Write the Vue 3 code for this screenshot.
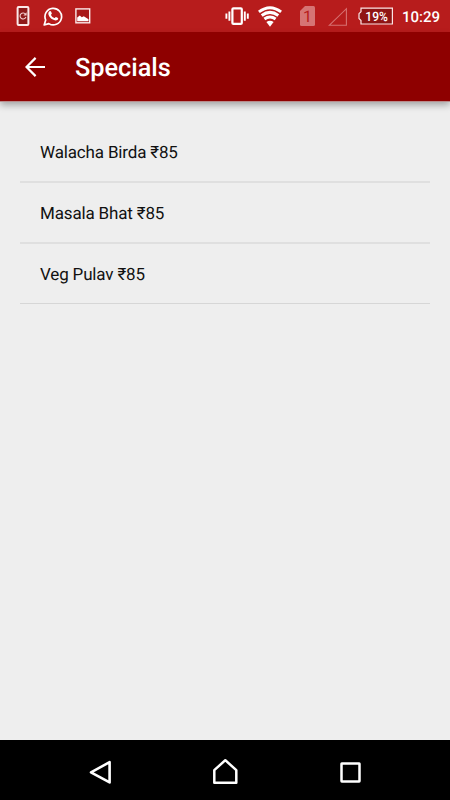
<script setup>
import { ref } from 'vue'

const title = ref('Specials')
const time = ref('10:29')
const battery = ref(19)

const dishes = ref([
  { name: 'Walacha Birda', price: 85 },
  { name: 'Masala Bhat', price: 85 },
  { name: 'Veg Pulav', price: 85 }
])
</script>

<template>
  <div class="screen">
    <div class="status">
      <!-- notifications -->
      <svg class="sync" width="14" height="32" viewBox="0 0 14 32">
        <rect x="1.6" y="7.1" width="10.8" height="17.8" rx="1" fill="#8f1a1a" stroke="#fbe9e9" stroke-width="2" />
        <path d="M9.6 14.4A3 3 0 1 0 9.9 17" fill="none" stroke="#f3cccc" stroke-width="1.1" />
        <path d="M10.6 12.3v3.2H7.4z" fill="#f3cccc" />
      </svg>
      <svg class="chat" width="20" height="32" viewBox="0 0 20 32">
        <path d="M1.2 25l1.5-5A8.3 8.3 0 1 1 5.8 23.6z" fill="none" stroke="#fff" stroke-width="1.7" stroke-linejoin="round" />
        <path d="M6.2 11.4c.7-.8 1.5-.6 1.8.1l.8 1.8c.2.5-.8 1.3-.8 1.6.7 1.5 1.9 2.5 3.4 3.1.5.1 1.1-1.3 1.6-1.1l2 1c.5.3 0 1.8-.8 2.2-1.3.8-3.2.3-4.9-.8-1.8-1.2-3.1-2.8-3.7-4.4-.5-1.4-.2-2.6.6-3.5z" fill="#fff" />
      </svg>
      <svg class="photo" width="16" height="32" viewBox="0 0 16 32">
        <rect x=".9" y="8.9" width="13.8" height="13.9" fill="#a81818" stroke="#fbe9e9" stroke-width="1.4" />
        <path d="M2.2 21.2v-3.6l2.6-2.1 2 1.7 2-1 4.7 3v2z" fill="#fff" />
      </svg>

      <div class="spacer"></div>

      <svg class="vibrate" width="24" height="32" viewBox="0 0 24 32">
        <rect x="7.4" y="8.3" width="9.4" height="15.6" rx="1" fill="none" stroke="#fff" stroke-width="2.2" />
        <path d="M4.4 11.6v9.2M19.8 11.6v9.2M1.4 13.6v5.2M22.8 13.6v5.2" stroke="#fff" stroke-width="1.9" />
      </svg>
      <svg class="wifi" width="24" height="32" viewBox="0 0 24 32">
        <path d="M.9 11.9Q12 3.5 23.1 11.9M3.7 15.5Q12 9.2 20.3 15.5M6.4 19Q12 14.9 17.6 19" fill="none" stroke="#fff" stroke-width="3" />
        <path d="M8.4 22Q12 19.4 15.6 22L12 26.7z" fill="#fff" />
      </svg>
      <svg class="sim" width="16" height="32" viewBox="0 0 16 32">
        <path d="M5 6h8.5a1.5 1.5 0 0 1 1.5 1.5v17a1.5 1.5 0 0 1-1.5 1.5h-12A1.5 1.5 0 0 1 0 24.5V11z" fill="#d67474" />
        <text x="7.4" y="22" text-anchor="middle" font-size="16" fill="#b71c1c">1</text>
      </svg>
      <svg class="signal" width="20" height="32" viewBox="0 0 20 32">
        <path d="M1.2 25.3L18.4 8.7V25.3z" fill="none" stroke="#d67070" stroke-width="1.1" />
      </svg>
      <svg class="battery" width="36" height="32" viewBox="0 0 36 32">
        <path d="M3 8.2H34.4V24H3V20.5L1 18.5V13.7L3 11.7z" fill="#8f1414" stroke="#fbe4e4" stroke-width="1.2" />
        <text x="18.6" y="21" text-anchor="middle" font-size="13" font-weight="500" textLength="22.5" lengthAdjust="spacingAndGlyphs" fill="#fff">{{ battery }}%</text>
      </svg>
      <span class="time">{{ time }}</span>
    </div>

    <div class="toolbar">
      <svg class="arrow" width="20" height="20" viewBox="0 0 20 20">
        <path d="M20 10H2M10.6 .9L1.5 10l9.1 9.1" fill="none" stroke="#fff" stroke-width="2.2" />
      </svg>
      <h1>{{ title }}</h1>
    </div>

    <ul class="list">
      <li v-for="dish in dishes" :key="dish.name">{{ dish.name }} ₹{{ dish.price }}</li>
    </ul>

    <div class="nav">
      <svg width="24" height="28" viewBox="0 0 24 28">
        <path d="M3 14.3L21.6 4.2V24.4z" fill="none" stroke="#fff" stroke-width="2.6" stroke-linejoin="round" />
      </svg>
      <svg width="28" height="28" viewBox="0 0 28 28">
        <path d="M3.3 24.7V12.2L14.3 2.2 25.3 12.2V24.7z" fill="none" stroke="#fff" stroke-width="2.5" stroke-linejoin="round" />
      </svg>
      <svg width="24" height="28" viewBox="0 0 24 28">
        <rect x="3.5" y="5.4" width="18" height="18" rx=".3" fill="none" stroke="#fff" stroke-width="2.5" stroke-linejoin="round" />
      </svg>
    </div>
  </div>
</template>

<style>
body {
  margin: 0;
}
</style>
<style scoped>
.screen {
  width: 450px;
  height: 800px;
  display: flex;
  flex-direction: column;
  background: #eee;
  font-family: Roboto, "Noto Sans", sans-serif;
  text-rendering: geometricPrecision;
  overflow: hidden;
}
svg {
  display: block;
  flex: none;
}
.status {
  height: 32px;
  flex: none;
  display: flex;
  padding: 0 10px 0 16px;
  background: #b71c1c;
}
.chat {
  margin-left: 13px;
}
.photo {
  margin-left: 12px;
}
.spacer {
  flex: 1;
}
.wifi {
  margin-left: 9px;
}
.sim {
  margin-left: 18px;
}
.signal {
  margin-left: 12px;
}
.battery {
  margin-left: 10px;
}
.time {
  width: 38px;
  margin-left: 8px;
  color: #fff;
  font-size: 15px;
  font-weight: 500;
  line-height: 34px;
  text-align: right;
  white-space: nowrap;
}
.toolbar {
  height: 69px;
  flex: none;
  display: flex;
  align-items: center;
  padding-left: 25px;
  background: #8e0000;
  box-shadow: 0 1px 0 #b98c8c, 0 4px 7px rgba(0, 0, 0, 0.32);
}
h1 {
  margin: 4px 0 0 30px;
  color: #fff;
  font-size: 25.3px;
  font-weight: 500;
  line-height: 30px;
}
.list {
  flex: 1;
  margin: 0;
  padding: 21px 20px 0;
  list-style: none;
}
li {
  height: 59px;
  padding-left: 20px;
  border-bottom: 2px solid #dfdfdf;
  color: #111;
  font-size: 17px;
  letter-spacing: -0.16px;
  line-height: 63px;
}
li:last-child {
  border-bottom-width: 1px;
  border-bottom-color: #d6d6d6;
}
.nav {
  height: 60px;
  flex: none;
  display: flex;
  align-items: center;
  justify-content: space-between;
  padding: 8px 88px 4px;
  box-sizing: border-box;
  background: #000;
}
</style>
